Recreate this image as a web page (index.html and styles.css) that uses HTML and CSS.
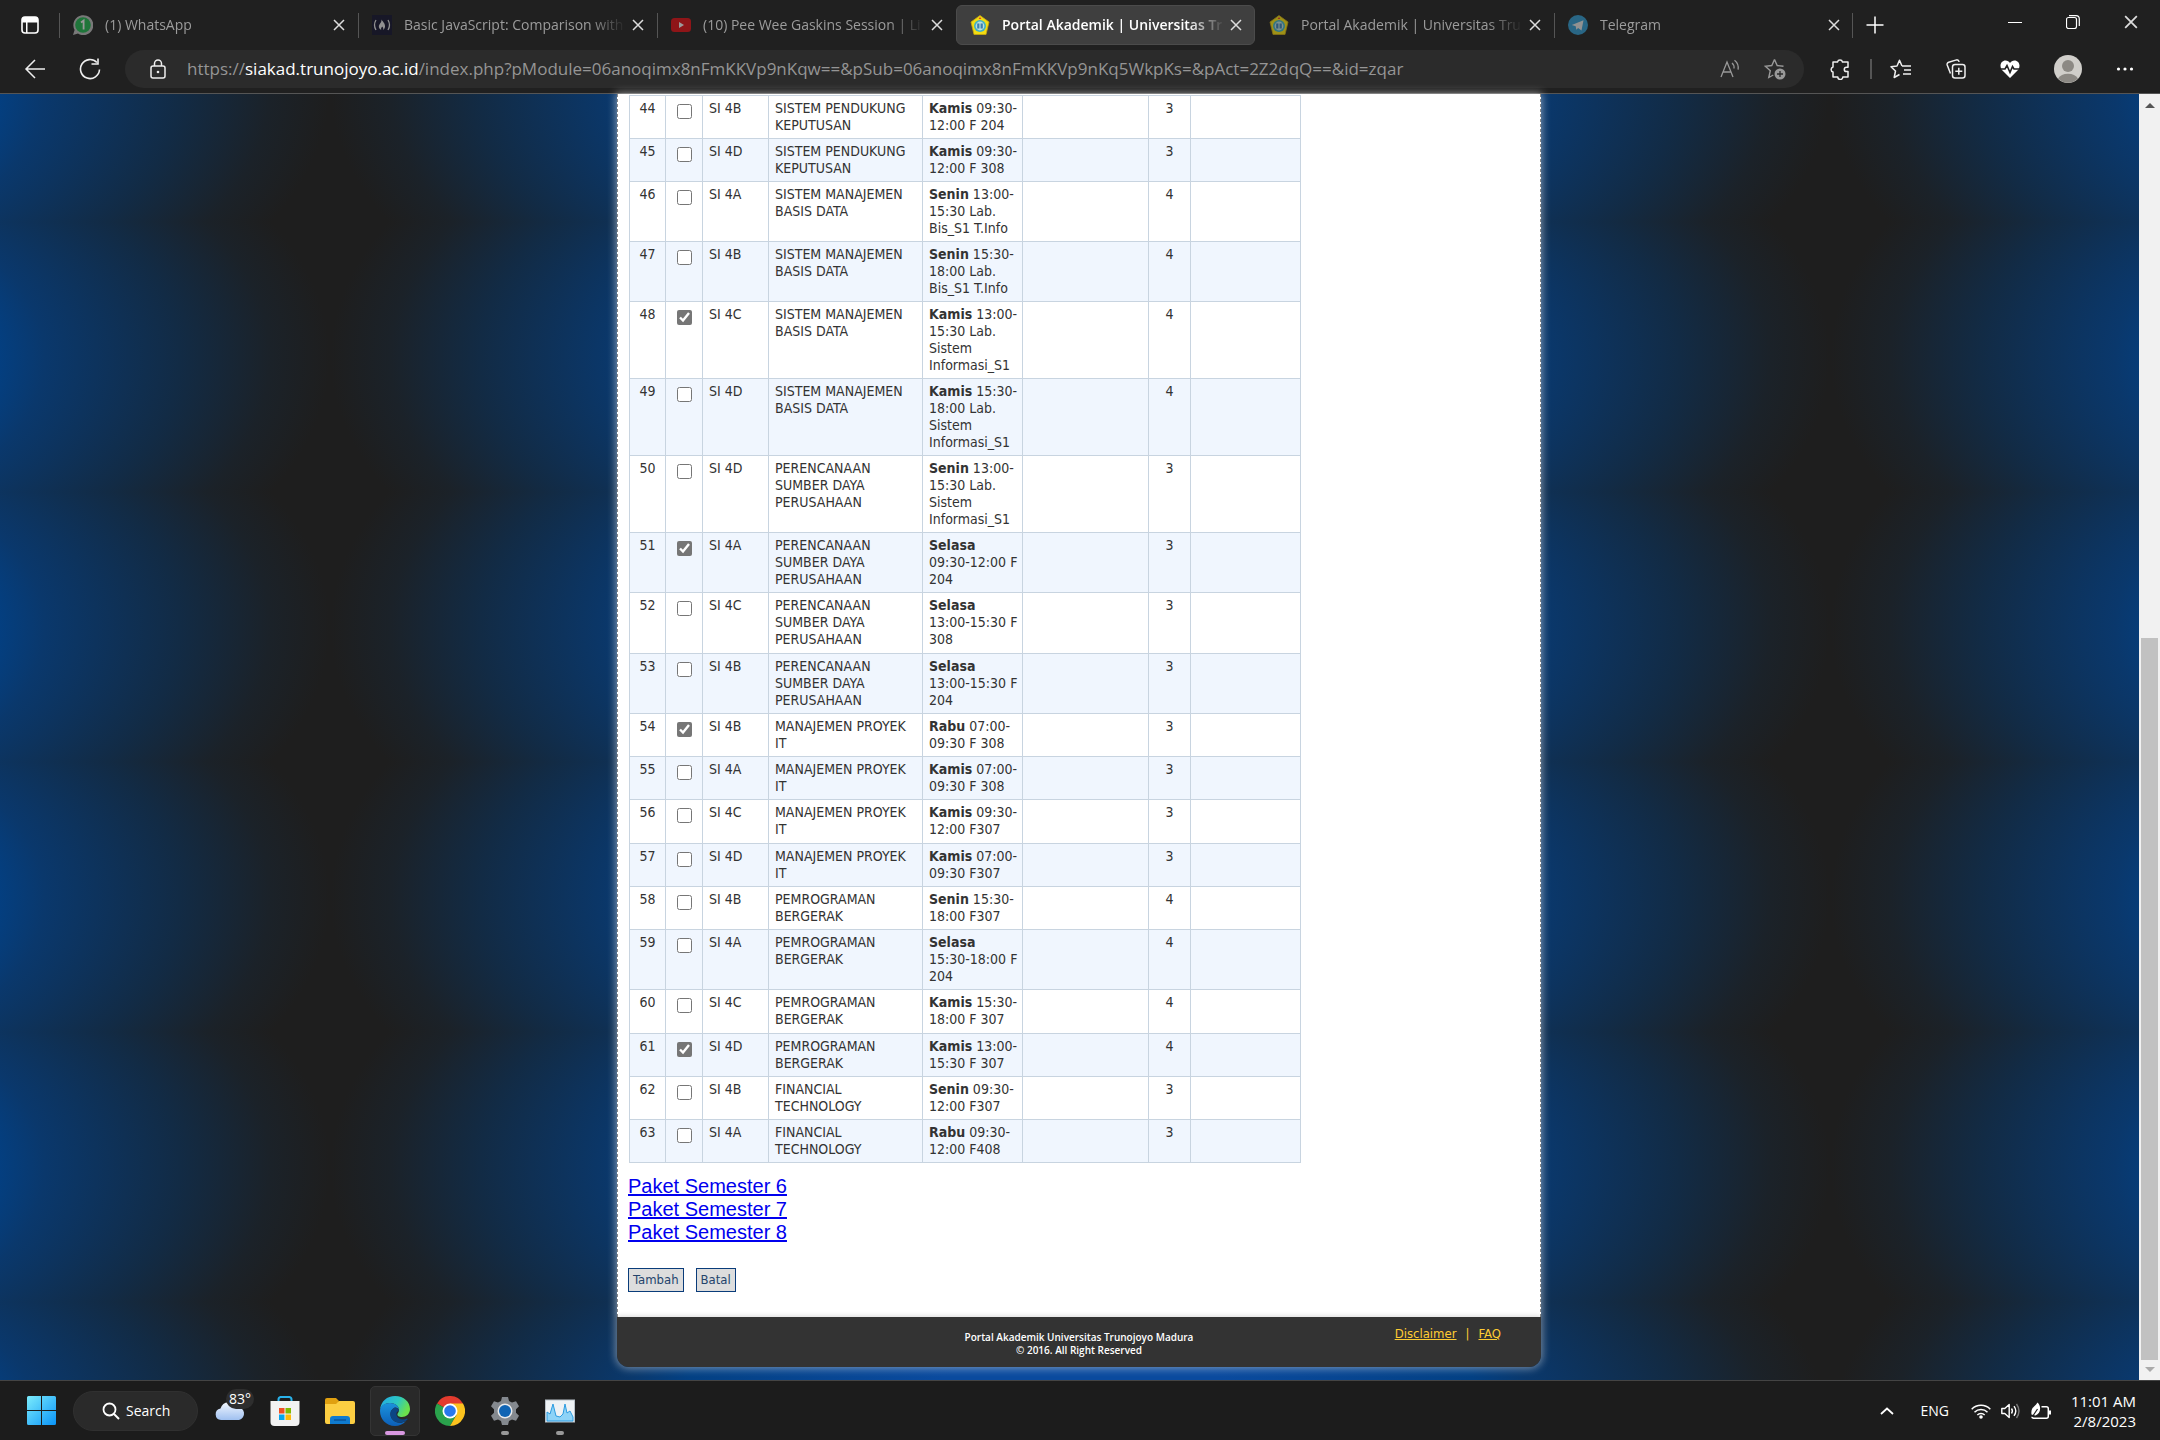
FILE: index.html
```html
<!DOCTYPE html>
<html lang="id">
<head>
<meta charset="utf-8">
<title>Portal Akademik | Universitas Trunojoyo Madura</title>
<link rel="stylesheet" href="styles.css">
</head>
<body>
<svg class="defs" width="0" height="0" aria-hidden="true">
  <symbol id="x" viewBox="0 0 12 12"><path d="M1 1l10 10M11 1L1 11" fill="none" stroke="currentColor" stroke-width="1.5"/></symbol>
  <symbol id="crest" viewBox="0 0 20 20"><path d="M10 0.5l9 6.5-3 12.5H4L1 7z" fill="#f2dc12" stroke="#c9a80c" stroke-width=".8"/><circle cx="10" cy="11" r="6" fill="#3fb0c4"/><circle cx="10" cy="11" r="4.4" fill="#b9dce0"/><path d="M7.2 8.5h2.2v5H7.2zM10.6 8.5h2.2v5h-2.2z" fill="#3b7fae"/><path d="M8.6 4l1.4-2 1.4 2z" fill="#d33"/></symbol>
</svg>

<header class="browser">
  <div class="tabstrip">
    <button class="icon-btn tab-menu" aria-label="Tab actions"><svg width="18" height="18" viewBox="0 0 18 18"><rect x="1" y="1" width="16" height="16" rx="3" fill="none" stroke="#fff" stroke-width="1.6"/><path d="M1 4a3 3 0 0 1 3-3h10a3 3 0 0 1 3 3v2.500H1zM5 6h1.500v11H5z" fill="#fff"/></svg></button>
    <nav class="tabs">
      <div class="tab">
        <svg class="favicon dim" viewBox="0 0 20 20"><path d="M0 20l1.600-5A10 10 0 1 1 5 18.600z" fill="#b5b5b5"/><circle cx="10" cy="10" r="7.800" fill="#1fae4c"/><path d="M8 7.500l2.600-2v9" fill="none" stroke="#e8e8e8" stroke-width="1.800"/></svg>
        <span class="tab-title">(1) WhatsApp</span><button class="icon-btn" aria-label="Close tab"><svg width="12" height="12"><use href="#x"/></svg></button>
      </div>
      <div class="tab">
        <svg class="favicon dim" viewBox="0 0 20 20"><rect width="20" height="20" fill="#12122c"/><path d="M4 5Q1 10 4 15M16 5q3 5 0 10" fill="none" stroke="#ddd" stroke-width="1.300"/><path d="M9.500 4.500c1 2 4 4 3.500 7.500-.3 1.600-1.400 2.600-2 3 .6-1.600.2-2.400-.9-3.400-.3 1-1.500 1.500-.9 3.400-2.600-1.300-3-4-1.600-5.800 1.400-1.800 2-2.700 1.900-4.700z" fill="#ddd"/></svg>
        <span class="tab-title">Basic JavaScript: Comparison with</span><button class="icon-btn" aria-label="Close tab"><svg width="12" height="12"><use href="#x"/></svg></button>
      </div>
      <div class="tab">
        <svg class="favicon dim" viewBox="0 0 20 20"><rect y="3" width="20" height="14" rx="3.500" fill="#d90f14"/><path d="M8 7l5 3-5 3z" fill="#eee"/></svg>
        <span class="tab-title">(10) Pee Wee Gaskins Session | Li</span><button class="icon-btn" aria-label="Close tab"><svg width="12" height="12"><use href="#x"/></svg></button>
      </div>
      <div class="tab active">
        <svg class="favicon"><use href="#crest"/></svg>
        <span class="tab-title">Portal Akademik | Universitas Tr</span><button class="icon-btn" aria-label="Close tab"><svg width="12" height="12"><use href="#x"/></svg></button>
      </div>
      <div class="tab after">
        <svg class="favicon dim"><use href="#crest"/></svg>
        <span class="tab-title">Portal Akademik | Universitas Tru</span><button class="icon-btn" aria-label="Close tab"><svg width="12" height="12"><use href="#x"/></svg></button>
      </div>
      <div class="tab">
        <svg class="favicon dim" viewBox="0 0 20 20"><circle cx="10" cy="10" r="10" fill="#2f96c8"/><path d="M3.800 10l11.700-4.800-2 10.300-3.400-2.500-1.800 1.700-.6-3.500z" fill="#ddd"/></svg>
        <span class="tab-title">Telegram</span><button class="icon-btn" aria-label="Close tab"><svg width="12" height="12"><use href="#x"/></svg></button>
      </div>
    </nav>
    <button class="icon-btn new-tab" aria-label="New tab"><svg width="18" height="18" viewBox="0 0 18 18"><path d="M9 0.500v17M.5 9h17" stroke="#fff" stroke-width="1.500"/></svg></button>
    <div class="window-buttons">
      <button class="icon-btn" aria-label="Minimize"><svg width="14" height="14" viewBox="0 0 14 14"><path d="M0 7.500h14" stroke="#fff"/></svg></button>
      <button class="icon-btn" aria-label="Restore"><svg width="14" height="14" viewBox="0 0 14 14"><rect x=".5" y="2.500" width="10" height="11" rx="2" fill="none" stroke="#fff" stroke-width="1.200"/><path d="M3 .600h7a3.300 3.300 0 0 1 3.300 3.300V11" fill="none" stroke="#fff" stroke-width="1.200"/></svg></button>
      <button class="icon-btn" aria-label="Close"><svg width="14" height="14"><use href="#x"/></svg></button>
    </div>
  </div>
  <div class="toolbar">
    <button class="icon-btn" aria-label="Back"><svg width="22" height="22" viewBox="0 0 22 22"><path d="M21 11H2M11 2L2 11l9 9" fill="none" stroke="#eee" stroke-width="1.500"/></svg></button>
    <button class="icon-btn reload" aria-label="Refresh"><svg width="22" height="22" viewBox="0 0 22 22"><path d="M20.500 11.500a9.500 9.500 0 1 1-2.600-7" fill="none" stroke="#eee" stroke-width="1.600"/><path d="M12.500 6H19V0.500" fill="none" stroke="#eee" stroke-width="1.600"/></svg></button>
    <div class="address">
      <svg width="16" height="20" viewBox="0 0 16 20"><rect x="1" y="7" width="14" height="12" rx="2" fill="none" stroke="#eee" stroke-width="1.500"/><path d="M4.500 7V4.500a3.500 3.500 0 0 1 7 0V7" fill="none" stroke="#eee" stroke-width="1.500"/><circle cx="8" cy="13" r="1.300" fill="#eee"/></svg>
      <span class="url">https://<b>siakad.trunojoyo.ac.id</b>/index.php?pModule=06anoqimx8nFmKKVp9nKqw==&amp;pSub=06anoqimx8nFmKKVp9nKq5WkpKs=&amp;pAct=2Z2dqQ==&amp;id=zqar</span>
      <button class="icon-btn" aria-label="Read aloud"><svg width="20" height="20" viewBox="0 0 20 20"><path d="M1 18L7 3l6 15M3 13h8" fill="none" stroke="#999" stroke-width="1.300"/><path d="M12 4q2.500 2 2 5.500M14.500 1.200q4.500 3.500 3.600 9.500" fill="none" stroke="#999" stroke-width="1.300"/></svg></button>
      <button class="icon-btn" aria-label="Add to favorites"><svg width="22" height="22" viewBox="0 0 22 22"><path d="M10.500 1.500l2.700 6 6.300.8M10.500 1.500l-2.700 6-6.500.7 5 4.500-1.500 6.800 4.500-2.500" fill="none" stroke="#999" stroke-width="1.400"/><circle cx="16" cy="16" r="5.500" fill="#999"/><path d="M16 13v6M13 16h6" stroke="#2b2b2b" stroke-width="1.300"/></svg></button>
    </div>
    <div class="tools">
      <button class="icon-btn" aria-label="Extensions"><svg width="20" height="22" viewBox="0 0 20 22"><path d="M3 4h4.500a2.600 2.600 0 0 1 5 0H18v5.200h-1.500a2.200 2.200 0 0 0 0 4.400H18V19h-5.200a2.500 2.500 0 0 1-5 0H3v-5a2.600 2.600 0 0 1 0-5z" fill="none" stroke="#eee" stroke-width="1.500" stroke-linejoin="round"/></svg></button>
      <span class="sep"></span>
      <button class="icon-btn" aria-label="Favorites"><svg width="22" height="20" viewBox="0 0 22 20"><path d="M12 7L9.500 1.200 7 7l-6 .7L5.500 12l-1.300 6.500L9.500 15.500M12 7h9M14 11h7M13 15h8" fill="none" stroke="#eee" stroke-width="1.500" stroke-linejoin="round"/></svg></button>
      <button class="icon-btn" aria-label="Collections"><svg width="20" height="20" viewBox="0 0 20 20"><rect x="6.500" y="5.500" width="12.500" height="13.500" rx="2.500" fill="none" stroke="#eee" stroke-width="1.500"/><path d="M4.500 14.500L1.200 6a2.200 2.200 0 0 1 1.500-2.800L10.500.900q2-.3 2.700 2M12.800 8.800v7M9.300 12.300h7" fill="none" stroke="#eee" stroke-width="1.500"/></svg></button>
      <button class="icon-btn" aria-label="Browser essentials"><svg width="20" height="20" viewBox="0 0 20 20"><path d="M10 19L1.500 10.500C-1 6 1.500 1.500 5.500 1.500c2 0 3.500 1 4.500 2.500 1-1.500 2.500-2.500 4.500-2.500 4 0 6.500 4.500 4 9z" fill="#fff"/><path d="M0 10h5l2-3.500 3 7 2.500-6 1.500 2.500h6" fill="none" stroke="#222" stroke-width="1.600"/></svg></button>
      <button class="icon-btn" aria-label="Profile"><svg width="28" height="28" viewBox="0 0 28 28"><circle cx="14" cy="14" r="14" fill="#d0ceca"/><circle cx="14" cy="11" r="6" fill="#8c8984"/><path d="M4 23.500a11 8 0 0 1 20 0 14 14 0 0 1-20 0z" fill="#8c8984"/></svg></button>
      <button class="icon-btn" aria-label="Settings and more"><svg width="18" height="6" viewBox="0 0 18 6"><circle cx="2.500" cy="3" r="1.600" fill="#fff"/><circle cx="9" cy="3" r="1.600" fill="#fff"/><circle cx="15.500" cy="3" r="1.600" fill="#fff"/></svg></button>
    </div>
  </div>
</header>

<main class="viewport">
  <div class="sheet">
    <form class="content">
      <table class="courses">
        <colgroup><col class="c-no"><col class="c-pick"><col class="c-class"><col class="c-name"><col class="c-time"><col class="c-room"><col class="c-sks"><col class="c-note"></colgroup>
        <tbody>
        <tr><td>44</td><td><input type="checkbox" aria-label="44"></td><td>SI 4B</td><td>SISTEM PENDUKUNG<br>KEPUTUSAN</td><td><b>Kamis</b> 09:30-<br>12:00 F 204</td><td></td><td>3</td><td></td></tr>
        <tr><td>45</td><td><input type="checkbox" aria-label="45"></td><td>SI 4D</td><td>SISTEM PENDUKUNG<br>KEPUTUSAN</td><td><b>Kamis</b> 09:30-<br>12:00 F 308</td><td></td><td>3</td><td></td></tr>
        <tr><td>46</td><td><input type="checkbox" aria-label="46"></td><td>SI 4A</td><td>SISTEM MANAJEMEN<br>BASIS DATA</td><td><b>Senin</b> 13:00-<br>15:30 Lab.<br>Bis_S1 T.Info</td><td></td><td>4</td><td></td></tr>
        <tr><td>47</td><td><input type="checkbox" aria-label="47"></td><td>SI 4B</td><td>SISTEM MANAJEMEN<br>BASIS DATA</td><td><b>Senin</b> 15:30-<br>18:00 Lab.<br>Bis_S1 T.Info</td><td></td><td>4</td><td></td></tr>
        <tr><td>48</td><td><input type="checkbox" aria-label="48" checked></td><td>SI 4C</td><td>SISTEM MANAJEMEN<br>BASIS DATA</td><td><b>Kamis</b> 13:00-<br>15:30 Lab.<br>Sistem<br>Informasi_S1</td><td></td><td>4</td><td></td></tr>
        <tr><td>49</td><td><input type="checkbox" aria-label="49"></td><td>SI 4D</td><td>SISTEM MANAJEMEN<br>BASIS DATA</td><td><b>Kamis</b> 15:30-<br>18:00 Lab.<br>Sistem<br>Informasi_S1</td><td></td><td>4</td><td></td></tr>
        <tr><td>50</td><td><input type="checkbox" aria-label="50"></td><td>SI 4D</td><td>PERENCANAAN<br>SUMBER DAYA<br>PERUSAHAAN</td><td><b>Senin</b> 13:00-<br>15:30 Lab.<br>Sistem<br>Informasi_S1</td><td></td><td>3</td><td></td></tr>
        <tr><td>51</td><td><input type="checkbox" aria-label="51" checked></td><td>SI 4A</td><td>PERENCANAAN<br>SUMBER DAYA<br>PERUSAHAAN</td><td><b>Selasa</b><br>09:30-12:00 F<br>204</td><td></td><td>3</td><td></td></tr>
        <tr class="three"><td>52</td><td><input type="checkbox" aria-label="52"></td><td>SI 4C</td><td>PERENCANAAN<br>SUMBER DAYA<br>PERUSAHAAN</td><td><b>Selasa</b><br>13:00-15:30 F<br>308</td><td></td><td>3</td><td></td></tr>
        <tr><td>53</td><td><input type="checkbox" aria-label="53"></td><td>SI 4B</td><td>PERENCANAAN<br>SUMBER DAYA<br>PERUSAHAAN</td><td><b>Selasa</b><br>13:00-15:30 F<br>204</td><td></td><td>3</td><td></td></tr>
        <tr><td>54</td><td><input type="checkbox" aria-label="54" checked></td><td>SI 4B</td><td>MANAJEMEN PROYEK<br>IT</td><td><b>Rabu</b> 07:00-<br>09:30 F 308</td><td></td><td>3</td><td></td></tr>
        <tr><td>55</td><td><input type="checkbox" aria-label="55"></td><td>SI 4A</td><td>MANAJEMEN PROYEK<br>IT</td><td><b>Kamis</b> 07:00-<br>09:30 F 308</td><td></td><td>3</td><td></td></tr>
        <tr class="two"><td>56</td><td><input type="checkbox" aria-label="56"></td><td>SI 4C</td><td>MANAJEMEN PROYEK<br>IT</td><td><b>Kamis</b> 09:30-<br>12:00 F307</td><td></td><td>3</td><td></td></tr>
        <tr><td>57</td><td><input type="checkbox" aria-label="57"></td><td>SI 4D</td><td>MANAJEMEN PROYEK<br>IT</td><td><b>Kamis</b> 07:00-<br>09:30 F307</td><td></td><td>3</td><td></td></tr>
        <tr><td>58</td><td><input type="checkbox" aria-label="58"></td><td>SI 4B</td><td>PEMROGRAMAN<br>BERGERAK</td><td><b>Senin</b> 15:30-<br>18:00 F307</td><td></td><td>4</td><td></td></tr>
        <tr><td>59</td><td><input type="checkbox" aria-label="59"></td><td>SI 4A</td><td>PEMROGRAMAN<br>BERGERAK</td><td><b>Selasa</b><br>15:30-18:00 F<br>204</td><td></td><td>4</td><td></td></tr>
        <tr class="two"><td>60</td><td><input type="checkbox" aria-label="60"></td><td>SI 4C</td><td>PEMROGRAMAN<br>BERGERAK</td><td><b>Kamis</b> 15:30-<br>18:00 F 307</td><td></td><td>4</td><td></td></tr>
        <tr><td>61</td><td><input type="checkbox" aria-label="61" checked></td><td>SI 4D</td><td>PEMROGRAMAN<br>BERGERAK</td><td><b>Kamis</b> 13:00-<br>15:30 F 307</td><td></td><td>4</td><td></td></tr>
        <tr><td>62</td><td><input type="checkbox" aria-label="62"></td><td>SI 4B</td><td>FINANCIAL<br>TECHNOLOGY</td><td><b>Senin</b> 09:30-<br>12:00 F307</td><td></td><td>3</td><td></td></tr>
        <tr><td>63</td><td><input type="checkbox" aria-label="63"></td><td>SI 4A</td><td>FINANCIAL<br>TECHNOLOGY</td><td><b>Rabu</b> 09:30-<br>12:00 F408</td><td></td><td>3</td><td></td></tr>
        </tbody>
      </table>
      <div class="packages">
        <a href="#6">Paket Semester 6</a>
        <a href="#7">Paket Semester 7</a>
        <a href="#8">Paket Semester 8</a>
      </div>
      <div class="actions"><button type="button">Tambah</button><button type="button">Batal</button></div>
    </form>
    <footer class="site-footer">
      <p>Portal Akademik Universitas Trunojoyo Madura<br>© 2016. All Right Reserved</p>
      <div class="footer-links"><a href="#disclaimer">Disclaimer</a><span>|</span><a href="#faq">FAQ</a></div>
    </footer>
  </div>
  <div class="scrollbar"><i class="up"></i><div class="track"><i class="thumb"></i></div><i class="down"></i></div>
</main>

<div class="taskbar">
  <div class="task-left">
    <button class="icon-btn start" aria-label="Start"><svg width="30" height="30" viewBox="0 0 30 30"><defs><linearGradient id="win" x2="1" y2="1"><stop stop-color="#7cecfc"/><stop offset="1" stop-color="#0a94f8"/></linearGradient></defs><path d="M1.500 0H14v14H0V1.500Q0 0 1.500 0zM15 0h12.500Q29 0 29 1.500V14H15zM0 15h14v14H1.500Q0 29 0 27.500zM15 15h14v12.500q0 1.500-1.500 1.500H15z" fill="url(#win)"/></svg></button>
    <button class="search"><svg width="18" height="18" viewBox="0 0 18 18"><circle cx="7.500" cy="7.500" r="6" fill="none" stroke="#fff" stroke-width="1.800"/><path d="M12 12l5 5" stroke="#fff" stroke-width="2"/></svg>Search</button>
    <button class="task" aria-label="Weather"><svg width="30" height="30" viewBox="0 0 30 30"><defs><linearGradient id="cl" y2="1" x2="0"><stop stop-color="#f2f7ff"/><stop offset="1" stop-color="#9fc0f0"/></linearGradient></defs><path d="M6 24a5.800 5.800 0 0 1-.5-11.500A9 9 0 0 1 22 11a6.600 6.600 0 0 1 2 13z" fill="url(#cl)"/></svg><span class="temp">83°</span></button>
    <button class="task" aria-label="Microsoft Store"><svg width="30" height="30" viewBox="0 0 30 30"><path d="M8.500 8V3.500A2.500 2.500 0 0 1 10.500 1h9a2.500 2.500 0 0 1 2 2.500V8" fill="none" stroke="#29b2ea" stroke-width="2"/><path d="M.5 5h29v21q0 4-4 4h-21q-4 0-4-4z" fill="#f2f2f2"/><path d="M9 12h5.500v5.500H9z" fill="#f04f23"/><path d="M15.500 12H21v5.500h-5.500z" fill="#80b902"/><path d="M9 18.500h5.500V24H9z" fill="#06a5ee"/><path d="M15.500 18.500H21V24h-5.500z" fill="#fdb90b"/></svg></button>
    <button class="task" aria-label="File Explorer"><svg width="30" height="30" viewBox="0 0 30 30"><path d="M0 4q0-2 2-2h9l3 3-2 4H0z" fill="#e0a010"/><path d="M0 8h11l3-3h14q2 0 2 2v19q0 2-2 2H2q-2 0-2-2z" fill="#fcce42"/><path d="M5 28v-5q0-3 3-3h14q3 0 3 3v5z" fill="#0f7bd0"/><path d="M9 24h12" stroke="#0a4e92" stroke-width="1.300"/></svg></button>
    <button class="task current" aria-label="Microsoft Edge"><svg width="30" height="30" viewBox="0 0 30 30"><defs><linearGradient id="eg" x2="1" y2=".4"><stop stop-color="#22a8e8"/><stop offset=".6" stop-color="#2cc8c0"/><stop offset="1" stop-color="#6be04c"/></linearGradient><linearGradient id="eb" x2="0" y2="1"><stop stop-color="#1b93dc"/><stop offset="1" stop-color="#0c5fb8"/></linearGradient></defs><path d="M0 14C1 5 7 0 15 0c9 0 15 6 15 13 0 5-4 8-8 8-3 0-5-1-4.500-3 .3-1 1.500-2 1.500-4C19 10 15 7 10 7 5 7 1 10 0 14z" fill="url(#eg)"/><path d="M0 15C0 10 4 7 10 7c5 0 9 3 9 7-1-2-3-3-5-2-4 2-5 8-1 12 3 3 8 4 13 1-3 3.500-7 5-11 5C6 30 0 23 0 15z" fill="url(#eb)"/><path d="M14 12c-4 2-5 8-1 12 3 3 9 4 14 0 1-.8.500-1.800-.5-1.300-4 1.800-9 .3-10-3.700-.5-3 1-4 2.500-4-.8-2.500-3-4-5-3z" fill="#0b4584"/></svg></button>
    <button class="task" aria-label="Google Chrome"><svg width="30" height="30" viewBox="0 0 30 30"><path d="M15 15L2 7.500A15 15 0 0 1 28 7.500z" fill="#e33b2e"/><path d="M15 15L2 7.500A15 15 0 0 0 15 30l6.500-11.200z" fill="#2aa24c"/><path d="M15 15l6.500 3.700L15 30A15 15 0 0 0 28 7.500H15z" fill="#fcc31e"/><circle cx="15" cy="15" r="7.500" fill="#fff"/><circle cx="15" cy="15" r="5.800" fill="#2a78ec"/></svg></button>
    <button class="task running" aria-label="Settings"><svg width="30" height="30" viewBox="0 0 30 30"><path d="M12 1h6l1 4 3 1.500 4-1.200 3 5-3 3v3.400l3 3-3 5-4-1.200L19 25l-1 4h-6l-1-4-3-1.500-4 1.200-3-5 3-3v-3.400l-3-3 3-5 4 1.200L11 5z" fill="#84898f"/><circle cx="15" cy="15" r="7.500" fill="#e8eaec"/><circle cx="15" cy="15" r="6" fill="#0f64b4"/></svg></button>
    <button class="task running" aria-label="Resource Monitor"><svg width="30" height="30" viewBox="0 0 30 30"><rect x=".5" y="4" width="29" height="22" fill="#eef2f5" stroke="#b8c0c8"/><path d="M2 25v-9l3 2 3-10 3 12 4 1 3-3 2-10 2 9 3-2 3 6v4z" fill="#8ed3f7" stroke="#2b9be0"/></svg></button>
  </div>
  <div class="tray">
    <svg width="14" height="8" viewBox="0 0 14 8"><path d="M1 7l6-5.500L13 7" fill="none" stroke="#fff" stroke-width="1.800"/></svg>
    <span class="lang">ENG</span>
    <div class="status">
      <svg width="20" height="16" viewBox="0 0 20 16"><g fill="none" stroke="#fff" stroke-width="1.500"><path d="M.7 6.200a13 13 0 0 1 18.600 0M3.500 9.200a9.200 9.200 0 0 1 13 0M6.300 12a5.300 5.300 0 0 1 7.400 0"/></g><circle cx="10" cy="14" r="1.800" fill="#fff"/></svg>
      <svg width="20" height="16" viewBox="0 0 20 16"><path d="M.8 5.500h3L8.200 1.500v13l-4.400-4h-3z" fill="none" stroke="#fff" stroke-width="1.400" stroke-linejoin="round"/><path d="M10.500 5.500q1.800 2.500 0 5M13 3.200q3.600 4.800 0 9.600" fill="none" stroke="#fff" stroke-width="1.400"/><path d="M15.500 1q5 7 0 14" fill="none" stroke="#777" stroke-width="1.400"/></svg>
      <svg width="20" height="18" viewBox="0 0 20 18"><path d="M10.500 4.800h4.800q2 0 2 2v7.400q0 2-2 2H3q-2 0-2-1.500" fill="none" stroke="#fff" stroke-width="1.500"/><path d="M18 8.500h2v4h-2z" fill="#fff"/><path d="M.5 12.500C-.5 5 4 5 6.500.5 10.500 4 10 11.500 4.500 13.500z" fill="#fff"/><path d="M6.500 7L1.500 14.500" stroke="#1c1c1c" stroke-width="1.200"/></svg>
    </div>
    <div class="clock">11:01 AM<br>2/8/2023</div>
  </div>
</div>
</body>
</html>
```
FILE: styles.css
```css
* { box-sizing: border-box; }
body { margin: 0; min-height: 100vh; display: flex; flex-direction: column; background: #1c1c1c; font-family: "Open Sans", "Noto Sans", sans-serif; }
.defs { position: absolute; }
svg { flex: none; display: block; }
.icon-btn { border: 0; padding: 0; background: none; color: #ddd; display: flex; flex: none; align-items: center; justify-content: center; }

/* browser chrome */
.browser { height: 94px; background: #202020; border-bottom: 1px solid #555; }
.tabstrip { height: 50px; display: flex; align-items: center; }
.tab-menu { width: 59px; }
.tabs { display: flex; min-width: 0; }
.tab { flex: 0 1 299px; width: 299px; min-width: 0; height: 40px; display: flex; align-items: center; gap: 12px; padding: 0 13px 0 14px; color: #9c9c9c; font-size: 14px; position: relative; }
.tab::before { content: ""; position: absolute; left: 0; top: 8px; bottom: 7px; width: 1px; background: #555; }
.tab:last-child::after { content: ""; position: absolute; right: 0; top: 8px; bottom: 7px; width: 1px; background: #555; }
.tab.active { padding: 0 12px 0 13px; background: #3f3f3f; border: 1px solid #4b4b4b; border-radius: 6px; color: #fff; font-weight: 600; }
.tab.active::before, .tab.after::before { display: none; }
.favicon { width: 20px; height: 20px; }
.favicon.dim { opacity: .6; }
.tab-title { flex: 1; min-width: 0; padding-bottom: 2px; margin-right: -6px; overflow: hidden; white-space: nowrap; mask-image: linear-gradient(to right, #000 calc(100% - 36px), transparent); }
.new-tab { margin-left: 13px; }
.window-buttons { margin-left: auto; padding-right: 22px; height: 44px; display: flex; align-self: start; gap: 44px; }
.toolbar { height: 38px; display: flex; align-items: center; padding: 0 26px 0 24px; }
.reload { margin-left: 33px; }
.address { flex: 1; min-width: 0; height: 38px; margin-left: 24px; padding: 0 18px 0 25px; border-radius: 19px; background: #2b2b2b; display: flex; align-items: center; gap: 24px; }
.url { flex: 1; min-width: 0; padding-bottom: 2px; overflow: hidden; white-space: nowrap; margin-left: -3px; color: #959595; font-size: 17px; }
.url b { color: #fff; font-weight: 400; }
.tools { display: flex; align-items: center; gap: 34px; margin-left: 26px; }
.sep { width: 2px; height: 20px; background: #555; margin: 0 -16px 0 -14px; }

/* page */
.viewport { flex: 1; position: relative; background: radial-gradient(ellipse 750px 350px at center, #0a4a9e 25%, #034083 55%, #0a386c 62%, #122b45 80%, #1b2229 92%, #1e1e1e 100%) center 128px / 1500px 270px; padding: 0 2px 10px 0; }
.sheet { width: 924px; max-width: 100%; margin: 0 auto; border-radius: 0 0 12px 12px; box-shadow: 0 0 8px 1px rgba(255, 255, 255, .5); font-family: "DejaVu Sans Condensed", "DejaVu Sans", sans-serif; }
.content { background: #fff; border: 1px dashed #888; border-width: 0 1px; padding: 1px 10px 25px; }
.courses { width: 672px; margin: 0 1px; table-layout: fixed; border-collapse: collapse; color: #333; font-size: 14px; line-height: 17px; }
.c-no { width: 36px; } .c-pick { width: 37px; } .c-class { width: 66px; } .c-name { width: 154px; } .c-time { width: 100px; } .c-room { width: 126px; } .c-sks { width: 42px; }
.courses td { border: 1px solid #c8d4e0; padding: 4px 0 4px 6px; vertical-align: top; white-space: nowrap; }
.courses td:nth-child(1), .courses td:nth-child(2), .courses td:nth-child(7) { padding: 4px 0; text-align: center; }
.courses tr:nth-child(even) { background: #f0f6fe; }
.courses .three { height: 61px; }
.courses .two { height: 44px; }
.courses input { display: block; width: 15px; height: 15px; margin: 4px auto 0; accent-color: #767676; }
.packages { display: flex; flex-direction: column; align-items: flex-start; margin-top: 12px; font: 20px/23px "Liberation Sans", Arial, sans-serif; }
.packages a { color: #00e; }
.actions { display: flex; gap: 12px; margin-top: 24px; }
.actions button { height: 24px; padding: 0 4px; border: 1px solid #0a3c7a; background: #ddd; color: #24446c; font: 13px/20px "DejaVu Sans Condensed", sans-serif; }
.site-footer { position: relative; height: 50px; background: #333; border-radius: 0 0 12px 12px; box-shadow: 0 -1px 5px rgba(0, 0, 0, .15); color: #fff; }
.site-footer p { margin: 0; padding-top: 14px; text-align: center; font: 600 10px/13px "Open Sans", sans-serif; }
.footer-links { position: absolute; top: 8px; right: 40px; display: flex; gap: 9px; font-size: 13px; line-height: 18px; color: #fc3; }
.footer-links a { color: #fc3; }
.scrollbar { position: absolute; top: 0; right: 0; bottom: 0; width: 21px; background: #f1f1f1; display: flex; flex-direction: column; align-items: center; padding: 9px 0 8px; gap: 7px; }
.up, .down { border: 5px solid transparent; }
.up { border-top: 0; border-bottom-color: #555; }
.down { border-bottom: 0; border-top-color: #aaa; }
.track { flex: 1; width: 17px; display: flex; flex-direction: column; justify-content: flex-end; }
.thumb { height: 58%; background: #c1c1c1; }

/* taskbar */
.taskbar { height: 60px; background: #1c1c1c; border-top: 1px solid #444; display: flex; justify-content: space-between; align-items: center; color: #fff; }
.task-left { display: flex; align-items: center; padding-left: 27px; }
.search { width: 125px; height: 40px; margin: 0 7px 0 16px; border: 1px solid #303030; border-radius: 20px; background: #2a2a2a; color: #fff; display: flex; align-items: center; gap: 6px; padding: 0 0 0 28px; font: 14px "Open Sans", sans-serif; }
.task { position: relative; width: 50px; height: 50px; margin-right: 5px; padding: 0; border: 1px solid transparent; border-radius: 5px; background: none; color: #fff; display: flex; align-items: center; justify-content: center; }
.current { background: #292929; border-color: #343434; }
.current::after, .running::after { content: ""; position: absolute; bottom: 0; width: 8px; height: 4px; border-radius: 2px; background: #999; }
.current::after { width: 20px; background: #d898e0; }
.temp { position: absolute; top: 2px; left: 20px; padding: 0 3px; border-radius: 10px; background: #2e2e2e; font: 14px/20px "Open Sans", sans-serif; }
.tray { display: flex; align-items: center; padding-right: 24px; }
.lang { margin: 0 22px 0 26px; font-size: 14px; }
.status { display: flex; align-items: center; gap: 10px; margin-right: 20px; }
.clock { text-align: right; font-size: 15px; line-height: 20px; }
```
